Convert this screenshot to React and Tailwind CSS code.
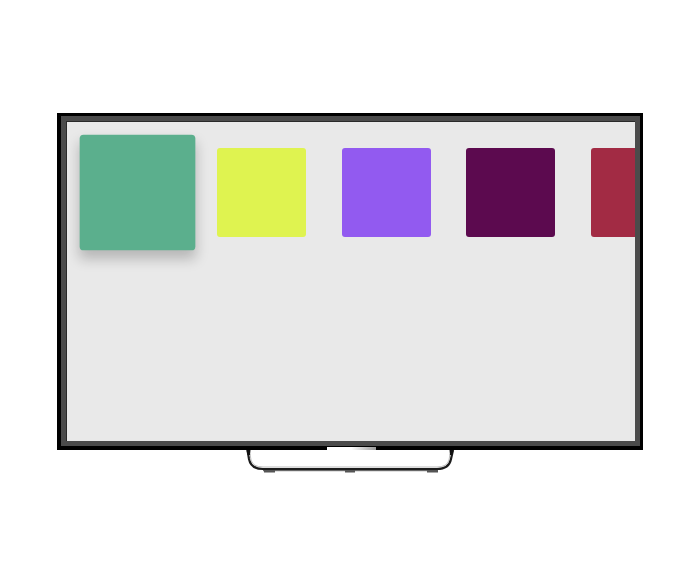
import React from 'react';

const tiles = [
  { id: 'green', color: 'bg-[#5baf8d]', focused: true },
  { id: 'lime', color: 'bg-[#dff350]' },
  { id: 'violet', color: 'bg-[#925af0]' },
  { id: 'plum', color: 'bg-[#5c0a4f]' },
  { id: 'crimson', color: 'bg-[#a22b44]' },
];

// Stand under the set: two curved legs joined by a base rail
const Stand = () => (
  <svg width="220" height="26" viewBox="0 0 220 26" className="block">
    <path d="M7.5 0 L9 9 Q11 19 23 19 L197 19 Q209 19 211 9 L213 0" fill="none" stroke="#1c1c1c" strokeWidth="2.2" />
    <path d="M10 4 L11 10 Q13 17 23 17 L197 17 Q207 17 209 10 L210 4" fill="none" stroke="#b5b5b5" strokeWidth="0.9" />
    <path d="M6.5 0 L10.5 0 L10 5 L7.5 5 Z" fill="#111" />
    <path d="M209.5 0 L213.5 0 L212.5 5 L210 5 Z" fill="#111" />
    <rect x="23" y="20" width="174" height="1.2" fill="#6a6a6a" />
    <rect x="24" y="20" width="11" height="2.5" fill="#555" />
    <rect x="105" y="20" width="10" height="2.5" fill="#555" />
    <rect x="187" y="20" width="11" height="2.5" fill="#555" />
  </svg>
);

export default function App() {
  return (
    <div className="w-[700px] h-[571px] bg-white flex flex-col items-center pt-[113px]">
      <div className="relative w-[586px] h-[337px] bg-black pt-[3px] pl-[4px] pr-[3px] pb-[4px]">
        <div className="w-full h-full bg-[#4b4b4b] p-[5px]">
          <div className="w-full h-full bg-[#e9e9e9] overflow-hidden border-t border-l border-[#2a2a2a]">
            <div className="flex gap-[35.5px] pl-[25.5px] pt-[26px]">
              {tiles.map((t) => (
                <div
                  key={t.id}
                  className={`shrink-0 w-[89px] h-[89px] rounded-[3px] ${t.color} ${
                    t.focused ? 'scale-[1.3] shadow-[0_6px_10px_rgba(0,0,0,0.22)]' : ''
                  }`}
                />
              ))}
            </div>
          </div>
        </div>
        {/* power light strip */}
        <div className="absolute left-[270px] bottom-0 w-[49px] h-[3px] bg-gradient-to-r from-white via-white to-[#9a9a9a]" />
      </div>
      <Stand />
    </div>
  );
}
